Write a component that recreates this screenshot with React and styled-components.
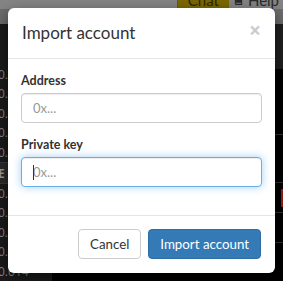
import React from "react";
import styled, { createGlobalStyle } from "styled-components";

const GlobalStyle = createGlobalStyle`
  html, body { margin: 0; padding: 0; overflow: hidden; }
  body { font-family: Lato, "Open Sans", sans-serif; }
  * { box-sizing: border-box; }
`;

const Page = styled.div`
  position: relative;
  width: 283px;
  height: 281px;
  overflow: hidden;
  background: #000;
  display: flex;
  flex-direction: column;
`;

const NavBar = styled.div`
  height: 9px;
  background: #858585;
  display: flex;
  justify-content: flex-end;
  align-items: flex-start;
  overflow: hidden;
  font-size: 15px;
  line-height: 18px;
`;

const NavItem = styled.div`
  margin-top: -9px;
  height: 18px;
  padding: 0 ${(p) => p.$pad}px;
  background: ${(p) => p.$bg || "transparent"};
  color: ${(p) => p.$color};
  border-left: ${(p) => (p.$sep ? "1px solid #6e5c08" : "none")};
  display: flex;
  align-items: center;
  gap: 4px;
  white-space: nowrap;
`;

const SubBar = styled.div`
  height: 16px;
  background: #6c6c6c;
`;

const Main = styled.div`
  flex: 1;
  display: flex;
`;

const LeftPanel = styled.div`
  width: 52px;
  background: #1b1b1b;
  padding-top: 41px;
  display: flex;
  flex-direction: column;
`;

const Num = styled.div`
  height: ${(p) => (p.$head ? 22 : 19.4)}px;
  line-height: ${(p) => (p.$head ? 22 : 19.4)}px;
  font-family: "Open Sans", sans-serif;
  font-size: 12px;
  font-weight: ${(p) => (p.$head ? 700 : 400)};
  color: ${(p) => (p.$head ? "#9a9a9a" : "#8a8a8a")};
  background: ${(p) => (p.$head ? "#2a2a2a" : "transparent")};
  border-top: ${(p) => (p.$head ? "1px solid #3a3a3a" : "none")};
  border-bottom: ${(p) => (p.$head ? "1px solid #3a3a3a" : "none")};
  padding-left: 2px;
  margin-left: -4px;
`;

const RightPanel = styled.div`
  flex: 1;
  display: flex;
  flex-direction: column;
`;

const RightTop = styled.div`
  height: 45px;
  background: #202020;
`;

const RightRow = styled.div`
  height: ${(p) => p.$h}px;
  border-bottom: 1px solid #333;
  display: flex;
  justify-content: flex-end;
  align-items: center;
`;

const RedBar = styled.div`
  width: 2px;
  height: 18px;
  background: #a01818;
`;

const Modal = styled.div`
  position: absolute;
  left: 8px;
  top: 8px;
  width: 267px;
  background: #fff;
  border-radius: 6px;
  box-shadow: 0 5px 15px rgba(0, 0, 0, 0.5);
  display: flex;
  flex-direction: column;
  color: #333;
`;

const Header = styled.div`
  height: 51px;
  padding: 0 14px;
  border-bottom: 1px solid #e5e5e5;
  display: flex;
  align-items: center;
  justify-content: space-between;
`;

const Title = styled.h4`
  margin: 0;
  font-size: 17px;
  font-weight: 400;
  line-height: 24px;
  color: #333;
`;

const Close = styled.button`
  border: 0;
  background: none;
  padding: 0;
  margin-top: -6px;
  font-family: "Open Sans", sans-serif;
  font-size: 21px;
  font-weight: 700;
  line-height: 1;
  color: #000;
  opacity: 0.2;
  cursor: pointer;
`;

const Body = styled.div`
  padding: 13px 13px 15px;
`;

const Group = styled.div`
  margin-bottom: 13px;
`;

const Label = styled.label`
  display: block;
  font-size: 12.5px;
  font-weight: 700;
  line-height: 18px;
  margin-bottom: 3px;
  color: #333;
`;

const Field = styled.div`
  position: relative;
`;

const Input = styled.input`
  display: block;
  width: 100%;
  height: 30px;
  padding: 0 11px;
  font-family: Lato, sans-serif;
  font-size: 13px;
  color: #555;
  background: #fff;
  border: 1px solid ${(p) => (p.$focused ? "#66afe9" : "#ccc")};
  border-radius: 4px;
  box-shadow: inset 0 1px 1px rgba(0, 0, 0, 0.075)
    ${(p) => (p.$focused ? ", 0 0 8px rgba(102, 175, 233, 0.6)" : "")};
  outline: none;
  caret-color: transparent;
  &::placeholder { color: #999; }
`;

const Caret = styled.span`
  position: absolute;
  left: 12px;
  top: 8px;
  width: 1px;
  height: 15px;
  background: #333;
`;

const Footer = styled.div`
  border-top: 1px solid #e5e5e5;
  padding: 13px 14px 14px;
  display: flex;
  justify-content: flex-end;
  gap: 7px;
`;

const Button = styled.button`
  height: 30px;
  padding: 0 11px;
  font-family: Lato, sans-serif;
  font-size: 13.3px;
  border-radius: 4px;
  border: 1px solid ${(p) => (p.$primary ? "#2e6da4" : "#ccc")};
  background: ${(p) => (p.$primary ? "#337ab7" : "#fff")};
  color: ${(p) => (p.$primary ? "#fff" : "#333")};
  cursor: pointer;
`;

const BookIcon = () => (
  <svg width="11" height="11" viewBox="0 0 12 12">
    <path d="M2 2h7l1 1v8H3L2 10z" fill="#2a2a2a" />
    <path d="M3 9h6" stroke="#858585" strokeWidth="1" />
  </svg>
);

const rows = ["0.0", "0.0", "0.0", "0.0", "0.0"];
const rows2 = ["0.2", "0.1", "0.1", "0.1", "0.014"];

export default function App() {
  return (
    <>
      <GlobalStyle />
      <Page>
        <NavBar>
          <NavItem $pad={10} $bg="#7c6800" $color="#2c2600" $sep>
            Chat
          </NavItem>
          <NavItem $pad={4} $color="#2a2a2a">
            <BookIcon />
            Help
          </NavItem>
        </NavBar>
        <SubBar />
        <Main>
          <LeftPanel>
            {rows.map((r, i) => (
              <Num key={"a" + i}>{r}</Num>
            ))}
            <Num $head>E</Num>
            {rows2.map((r, i) => (
              <Num key={"b" + i}>{r}</Num>
            ))}
          </LeftPanel>
          <RightPanel>
            <RightTop />
            <RightRow $h={66} />
            <RightRow $h={48} />
            <RightRow $h={30}>
              <RedBar />
            </RightRow>
            <RightRow $h={30} />
          </RightPanel>
        </Main>
        <Modal>
          <Header>
            <Title>Import account</Title>
            <Close aria-label="Close">×</Close>
          </Header>
          <Body>
            <Group>
              <Label>Address</Label>
              <Field>
                <Input placeholder="0x..." />
              </Field>
            </Group>
            <Group>
              <Label>Private key</Label>
              <Field>
                <Input placeholder="0x..." $focused />
                <Caret />
              </Field>
            </Group>
          </Body>
          <Footer>
            <Button>Cancel</Button>
            <Button $primary>Import account</Button>
          </Footer>
        </Modal>
      </Page>
    </>
  );
}
